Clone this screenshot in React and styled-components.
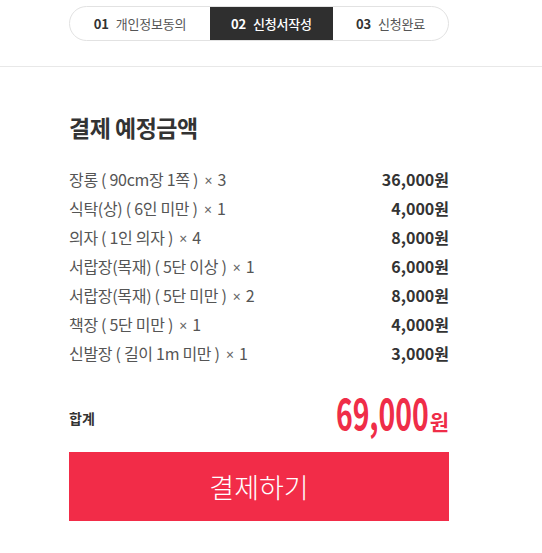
import React from 'react'
import styled, { createGlobalStyle } from 'styled-components'

const GlobalStyle = createGlobalStyle`
	body {
		margin: 0;
		background: #fff;
		font-family: 'Noto Sans CJK KR', 'Noto Sans', sans-serif;
		color: #333;
	}
`

const steps = [
	{ no: '01', label: '개인정보동의' },
	{ no: '02', label: '신청서작성', active: true },
	{ no: '03', label: '신청완료' },
]

const items = [
	{ name: '장롱 ( 90cm장 1쪽 )', qty: 3, price: '36,000' },
	{ name: '식탁(상) ( 6인 미만 )', qty: 1, price: '4,000' },
	{ name: '의자 ( 1인 의자 )', qty: 4, price: '8,000' },
	{ name: '서랍장(목재) ( 5단 이상 )', qty: 1, price: '6,000' },
	{ name: '서랍장(목재) ( 5단 미만 )', qty: 2, price: '8,000' },
	{ name: '책장 ( 5단 미만 )', qty: 1, price: '4,000' },
	{ name: '신발장 ( 길이 1m 미만 )', qty: 1, price: '3,000' },
]

const App = () => {
	return (
		<>
			<GlobalStyle />
			<Page>
				<StepHeader>
					<StepBar>
						{steps.map(step => (
							<Step key={step.no} $active={step.active}>
								<b>{step.no}</b>
								{step.label}
							</Step>
						))}
					</StepBar>
				</StepHeader>

				<Content>
					<Title>결제 예정금액</Title>
					<ItemList>
						{items.map(item => (
							<Item key={item.name}>
								<span>
									{item.name} <Times>×</Times> {item.qty}
								</span>
								<Price>{item.price}원</Price>
							</Item>
						))}
					</ItemList>

					<Total>
						<TotalLabel>합계</TotalLabel>
						<TotalPrice>
							<Digits>69,000</Digits>
							<small>원</small>
						</TotalPrice>
					</Total>

					<PayButton>결제하기</PayButton>
				</Content>
			</Page>
		</>
	)
}

const Page = styled.div`
	width: 542px;
	min-height: 553px;
	background: #fff;
`

const StepHeader = styled.div`
	padding: 6px 0 25px 69px;
	border-bottom: 1px solid #e8e8e8;
`

const StepBar = styled.div`
	width: 380px;
	height: 35px;
	display: grid;
	grid-template-columns: 140px 123px 1fr;
	border: 1px solid #e2e2e2;
	border-radius: 18px;
	overflow: hidden;
	box-sizing: border-box;
`

const Step = styled.div`
	display: flex;
	align-items: center;
	justify-content: center;
	gap: 7px;
	font-size: 13px;
	color: ${props => (props.$active ? '#fff' : '#555')};
	background: ${props => (props.$active ? '#2f2f2f' : 'transparent')};
	font-weight: ${props => (props.$active ? 500 : 400)};
	letter-spacing: -0.2px;
	b {
		font-weight: 700;
		color: ${props => (props.$active ? '#fff' : '#333')};
	}
`

const Content = styled.div`
	width: 380px;
	margin: 0 0 0 69px;
	padding-top: 44px;
`

const Title = styled.h2`
	margin: 0 0 21px;
	font-size: 23px;
	font-weight: 700;
	color: #333;
	line-height: 32px;
	letter-spacing: -0.5px;
`

const ItemList = styled.ul`
	list-style: none;
	margin: 0;
	padding: 0;
`

const Item = styled.li`
	display: flex;
	justify-content: space-between;
	align-items: center;
	height: 29px;
	font-size: 16px;
	color: #555;
	letter-spacing: -0.3px;
`

const Times = styled.span`
	font-family: 'Noto Sans', sans-serif;
	font-size: 14px;
	color: #666;
	margin: 0 2px 0 3px;
`

const Price = styled.span`
	font-weight: 700;
	color: #333;
	letter-spacing: 0;
`

const Total = styled.div`
	display: flex;
	justify-content: space-between;
	align-items: center;
	margin-top: 22px;
	height: 50px;
`

const TotalLabel = styled.span`
	font-size: 14px;
	font-weight: 700;
	color: #333;
	padding-top: 8px;
`

const TotalPrice = styled.strong`
	display: flex;
	align-items: baseline;
	color: #ef2d48;
	margin-top: -6px;
	small {
		font-size: 21px;
		font-weight: 700;
	}
`

const Digits = styled.span`
	display: inline-block;
	font-size: 43px;
	font-weight: 700;
	letter-spacing: 0;
	transform: scaleX(0.66);
	transform-origin: right center;
	margin-left: -50px;
	margin-right: 1px;
`

const PayButton = styled.button`
	display: block;
	width: 100%;
	height: 69px;
	margin-top: 13px;
	border: none;
	background: #f22c48;
	color: #fff;
	font-family: 'Noto Sans CJK KR', sans-serif;
	font-size: 27px;
	font-weight: 300;
	cursor: pointer;
`

export default App
